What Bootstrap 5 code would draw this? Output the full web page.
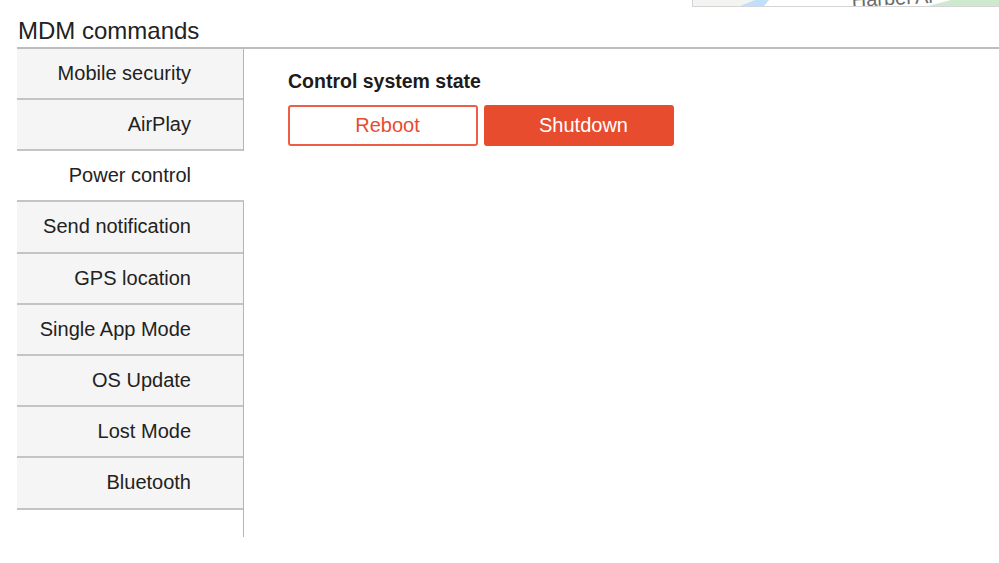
<!doctype html>
<html lang="en">
<head>
<meta charset="utf-8">
<title>MDM commands</title>
<link href="https://cdn.jsdelivr.net/npm/bootstrap@5.3.0/dist/css/bootstrap.min.css" rel="stylesheet">
<style>
html,body{height:100%;background:#fff;}
body{font-family:"Liberation Sans",Arial,sans-serif;color:#1f1f1f;overflow:hidden;}
.map-strip{height:7px;margin-left:692px;border-left:1px solid #d5d5d5;border-bottom:1px solid #d5d5d5;background:#fff;overflow:hidden;}
.map-strip svg{display:block;}
.map-label{font-size:20px;fill:#6b6b6b;}
.page-title{font-size:24px;font-weight:400;line-height:28px;margin:10px 0 2px 18px;color:#222;}
.panel-wrap{margin-left:17px;border-top:2px solid #bdbdbd;height:490px;}
.side-tabs{width:227px;flex:none;border-right:1px solid #b5b5b5;}
.side-link{display:block;height:51.15px;line-height:49px;text-align:right;padding-right:52px;font-size:20px;color:#222;background:#f5f5f5;border-bottom:2px solid #c4c4c4;text-decoration:none;}
.side-link.current{background:#fff;margin-right:-1px;padding-right:53px;position:relative;}
.side-link.final{height:52px;}
.state-pane{padding:20px 0 0 44px;}
.state-title{font-size:19.5px;font-weight:700;line-height:24px;margin-bottom:12px;color:#1c1c1c;}
.btn-state{width:190px;height:41px;padding:0 0 0 9px;font-size:20px;line-height:37px;border:2px solid #e84c2e;border-radius:3px;}
.btn-reboot{background:#fff;color:#e84c2e;border-color:#ec5f45;}
.btn-shutdown{background:#e84c2e;color:#fff;}
.btn-row{gap:6px;}
</style>
</head>
<body>
<div class="map-strip">
<svg width="307" height="6" viewBox="0 0 307 6">
<path d="M0 0H64L47 6H0Z" fill="#f3f4f2"/>
<path d="M47 6 L62 0 H76 L71 6Z" fill="#bfdffa"/>
<path d="M235 6 L258 0 H307 V6Z" fill="#cfe9cf"/>
<text class="map-label" x="159" y="7" transform="rotate(-3 159 7)">Harbel Ar</text>
</svg>
</div>
<h1 class="page-title">MDM commands</h1>
<div class="panel-wrap d-flex">
<nav class="side-tabs">
<a class="side-link" href="#">Mobile security</a>
<a class="side-link" href="#">AirPlay</a>
<a class="side-link current" href="#">Power control</a>
<a class="side-link" href="#">Send notification</a>
<a class="side-link" href="#">GPS location</a>
<a class="side-link" href="#">Single App Mode</a>
<a class="side-link" href="#">OS Update</a>
<a class="side-link" href="#">Lost Mode</a>
<a class="side-link final" href="#">Bluetooth</a>
</nav>
<section class="state-pane">
<div class="state-title">Control system state</div>
<div class="d-flex btn-row">
<button type="button" class="btn btn-state btn-reboot">Reboot</button>
<button type="button" class="btn btn-state btn-shutdown">Shutdown</button>
</div>
</section>
</div>
<script src="https://cdn.jsdelivr.net/npm/bootstrap@5.3.0/dist/js/bootstrap.bundle.min.js"></script>
</body>
</html>
